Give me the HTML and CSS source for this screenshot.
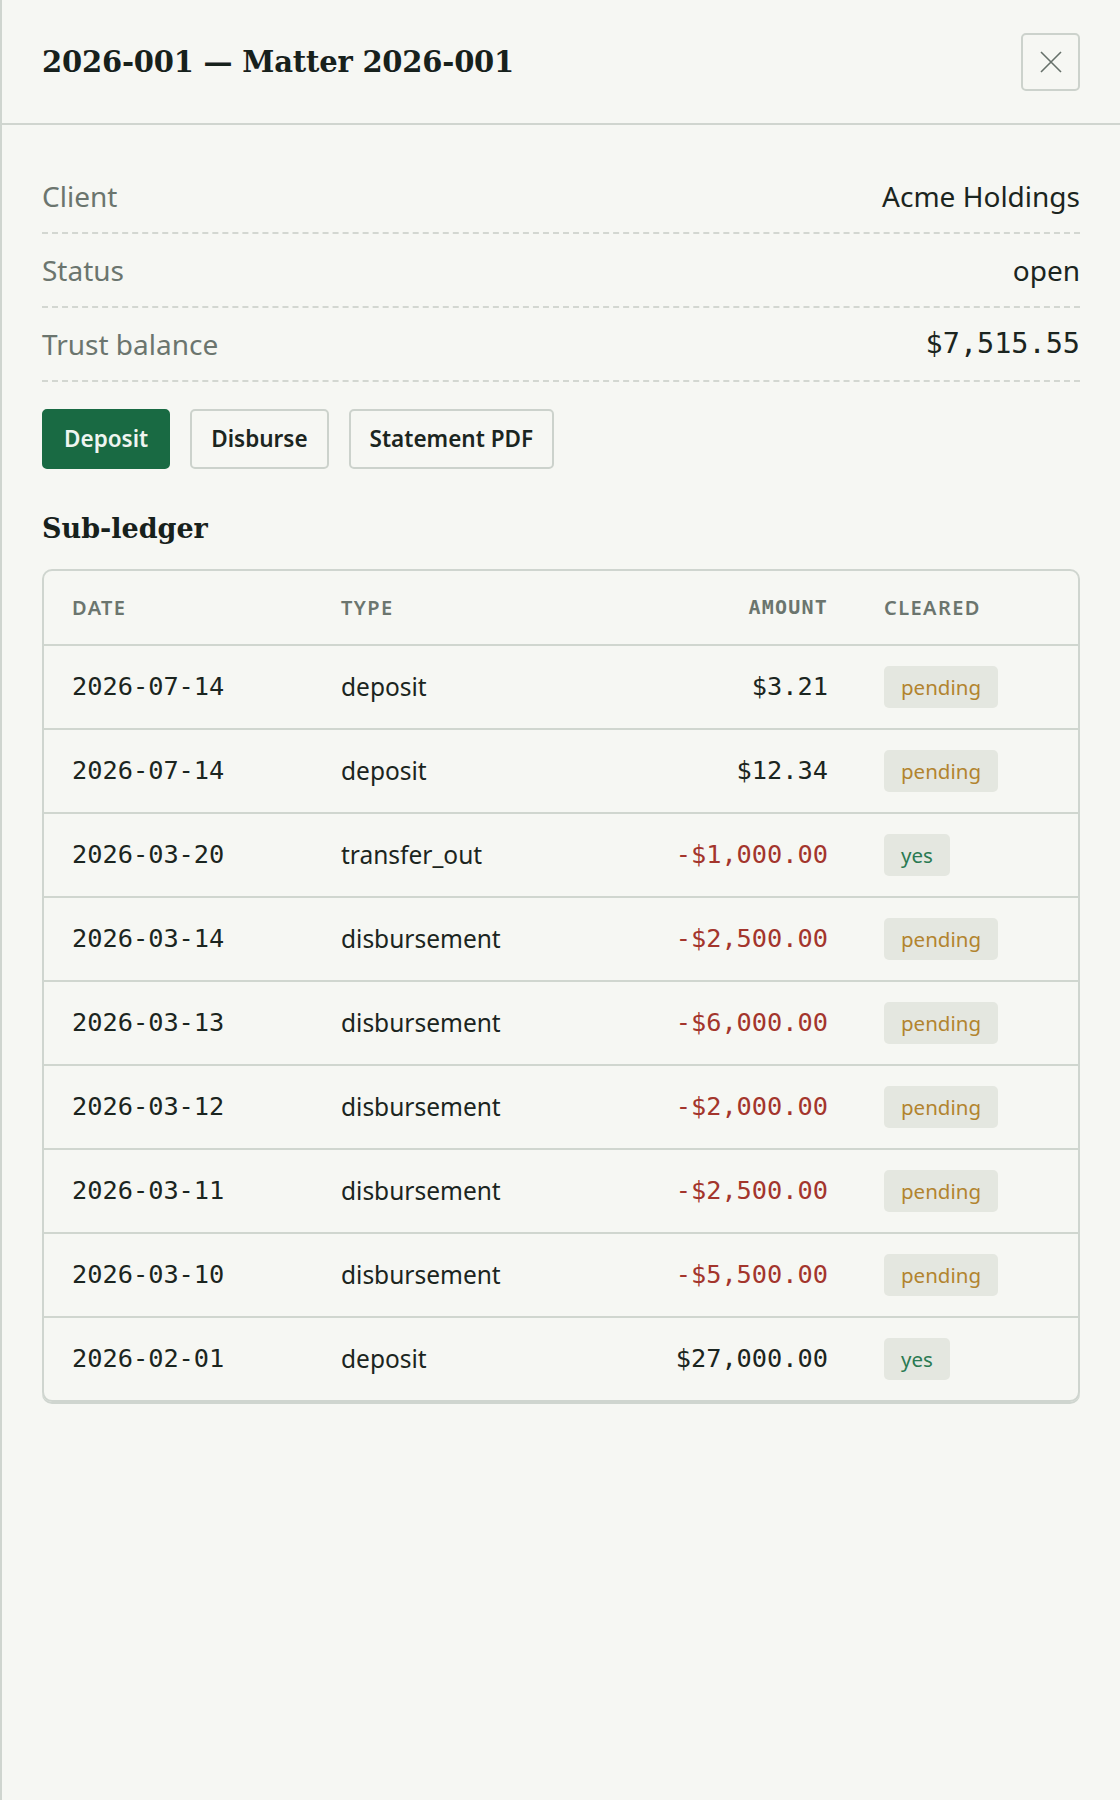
FILE: index.html
```html
<!DOCTYPE html>
<html lang="en">
<head>
    <meta charset="UTF-8">
    <meta name="viewport" content="width=device-width, initial-scale=1.0">
    <title>Matter 2026-001</title>
    <link rel="stylesheet" href="styles.css">
</head>
<body>

<aside class="drawer">
    <header class="drawer-header">
        <h2 class="drawer-title">2026-001 — Matter 2026-001</h2>
        <button class="close-btn" aria-label="Close">
            <svg width="22" height="22" viewBox="0 0 22 22">
                <path d="M1 1 L21 21 M21 1 L1 21" stroke="#66706a" stroke-width="1.6" fill="none"/>
            </svg>
        </button>
    </header>

    <div class="drawer-body">
        <!-- Matter summary -->
        <dl class="summary">
            <div class="summary-row">
                <dt>Client</dt>
                <dd>Acme Holdings</dd>
            </div>
            <div class="summary-row">
                <dt>Status</dt>
                <dd>open</dd>
            </div>
            <div class="summary-row">
                <dt>Trust balance</dt>
                <dd class="mono balance">$7,515.55</dd>
            </div>
        </dl>

        <div class="actions">
            <button class="btn btn-primary">Deposit</button>
            <button class="btn">Disburse</button>
            <button class="btn">Statement PDF</button>
        </div>

        <h3 class="section-title">Sub-ledger</h3>

        <div class="ledger-wrap">
            <table class="ledger">
                <thead>
                    <tr>
                        <th class="col-date">Date</th>
                        <th class="col-type">Type</th>
                        <th class="col-amount mono">Amount</th>
                        <th class="col-cleared">Cleared</th>
                    </tr>
                </thead>
                <tbody>
                    <tr>
                        <td class="mono">2026-07-14</td>
                        <td>deposit</td>
                        <td class="mono amount">$3.21</td>
                        <td><span class="badge pending">pending</span></td>
                    </tr>
                    <tr>
                        <td class="mono">2026-07-14</td>
                        <td>deposit</td>
                        <td class="mono amount">$12.34</td>
                        <td><span class="badge pending">pending</span></td>
                    </tr>
                    <tr>
                        <td class="mono">2026-03-20</td>
                        <td>transfer_out</td>
                        <td class="mono amount neg">-$1,000.00</td>
                        <td><span class="badge yes">yes</span></td>
                    </tr>
                    <tr>
                        <td class="mono">2026-03-14</td>
                        <td>disbursement</td>
                        <td class="mono amount neg">-$2,500.00</td>
                        <td><span class="badge pending">pending</span></td>
                    </tr>
                    <tr>
                        <td class="mono">2026-03-13</td>
                        <td>disbursement</td>
                        <td class="mono amount neg">-$6,000.00</td>
                        <td><span class="badge pending">pending</span></td>
                    </tr>
                    <tr>
                        <td class="mono">2026-03-12</td>
                        <td>disbursement</td>
                        <td class="mono amount neg">-$2,000.00</td>
                        <td><span class="badge pending">pending</span></td>
                    </tr>
                    <tr>
                        <td class="mono">2026-03-11</td>
                        <td>disbursement</td>
                        <td class="mono amount neg">-$2,500.00</td>
                        <td><span class="badge pending">pending</span></td>
                    </tr>
                    <tr>
                        <td class="mono">2026-03-10</td>
                        <td>disbursement</td>
                        <td class="mono amount neg">-$5,500.00</td>
                        <td><span class="badge pending">pending</span></td>
                    </tr>
                    <tr>
                        <td class="mono">2026-02-01</td>
                        <td>deposit</td>
                        <td class="mono amount">$27,000.00</td>
                        <td><span class="badge yes">yes</span></td>
                    </tr>
                </tbody>
            </table>
        </div>
    </div>
</aside>

</body>
</html>
```

FILE: styles.css
```css
/* General Styles */
body {
    margin: 0;
    padding: 0;
    background-color: #f6f7f3;
    color: #1b2520;
    font-family: 'Noto Sans', 'Open Sans', sans-serif;
}

.mono {
    font-family: 'DejaVu Sans Mono', 'Liberation Mono', monospace;
}

/* Side drawer */
.drawer {
    min-height: 1800px;
    border-left: 2px solid #cfd5cf;
    box-sizing: border-box;
}

.drawer-header {
    display: flex;
    justify-content: space-between;
    align-items: center;
    padding: 33px 40px 32px 40px;
    border-bottom: 2px solid #d0d5cf;
}

.drawer-title {
    margin: 0;
    font-family: 'DejaVu Serif', 'Liberation Serif', serif;
    font-weight: bold;
    font-size: 29px;
    letter-spacing: -0.2px;
    color: #17211c;
}

.close-btn {
    width: 59px;
    height: 58px;
    display: flex;
    align-items: center;
    justify-content: center;
    background: none;
    border: 2px solid #ccd2cc;
    border-radius: 5px;
    cursor: pointer;
    padding: 0;
}

.drawer-body {
    padding: 35px 40px 40px 40px;
}

/* Summary list */
.summary {
    margin: 0;
}

.summary-row {
    display: flex;
    justify-content: space-between;
    align-items: center;
    padding: 17px 0;
    line-height: 38px;
    border-bottom: 2px dashed #d3d7d1;
    font-size: 28px;
}

.summary-row dt {
    color: #6b756e;
}

.summary-row dd {
    margin: 0;
    color: #1b2520;
}

.summary-row .balance {
    font-size: 28.5px;
}

/* Action buttons */
.actions {
    display: flex;
    gap: 20px;
    margin-top: 27px;
}

.btn {
    font-family: 'Noto Sans', 'Open Sans', sans-serif;
    font-size: 22.5px;
    font-weight: 600;
    line-height: 34px;
    padding: 11px 19px;
    color: #1b2520;
    background: none;
    border: 2px solid #ccd2cc;
    border-radius: 5px;
    cursor: pointer;
}

.btn-primary {
    background-color: #196a43;
    border-color: #196a43;
    color: #eef5f0;
    padding: 11px 20px;
}

.section-title {
    margin: 43px 0 23px 0;
    font-family: 'DejaVu Serif', 'Liberation Serif', serif;
    font-weight: bold;
    font-size: 27px;
    line-height: 34px;
    color: #17211c;
}

/* Sub-ledger table */
.ledger-wrap {
    border: 2px solid #cfd5cf;
    border-radius: 10px;
    box-shadow: 0 2px 0 #cfd5cf;
    overflow: hidden;
}

.ledger {
    width: 100%;
    border-collapse: collapse;
    table-layout: fixed;
}

.ledger th,
.ledger td {
    box-sizing: border-box;
    vertical-align: middle;
}

.ledger th {
    text-align: left;
    font-size: 20px;
    font-weight: 600;
    letter-spacing: 1.4px;
    text-transform: uppercase;
    color: #6b756e;
    padding: 21px 28px;
    line-height: 31px;
    border-bottom: 2px solid #d0d6cf;
}

.ledger th.col-amount {
    text-align: right;
    font-weight: bold;
    letter-spacing: 1.2px;
}

.col-date { width: 269px; }
.col-type { width: 290px; }
.col-cleared { width: 222px; }

.ledger td {
    font-size: 24.5px;
    padding: 20px 28px;
    line-height: 42px;
    border-bottom: 2px solid #d0d6cf;
    white-space: nowrap;
}

.ledger tbody tr:last-child td {
    border-bottom: none;
}

.ledger td.mono {
    font-size: 25.3px;
}

.amount {
    text-align: right;
}

.neg {
    color: #a3352c;
}

/* Cleared badges */
.badge {
    display: inline-block;
    vertical-align: top;
    font-size: 20.5px;
    line-height: 42px;
    padding: 0 17px;
    border-radius: 5px;
    background-color: #e4e7e0;
}

.badge.pending {
    color: #b2842f;
}

.badge.yes {
    color: #2a7a52;
}
```
